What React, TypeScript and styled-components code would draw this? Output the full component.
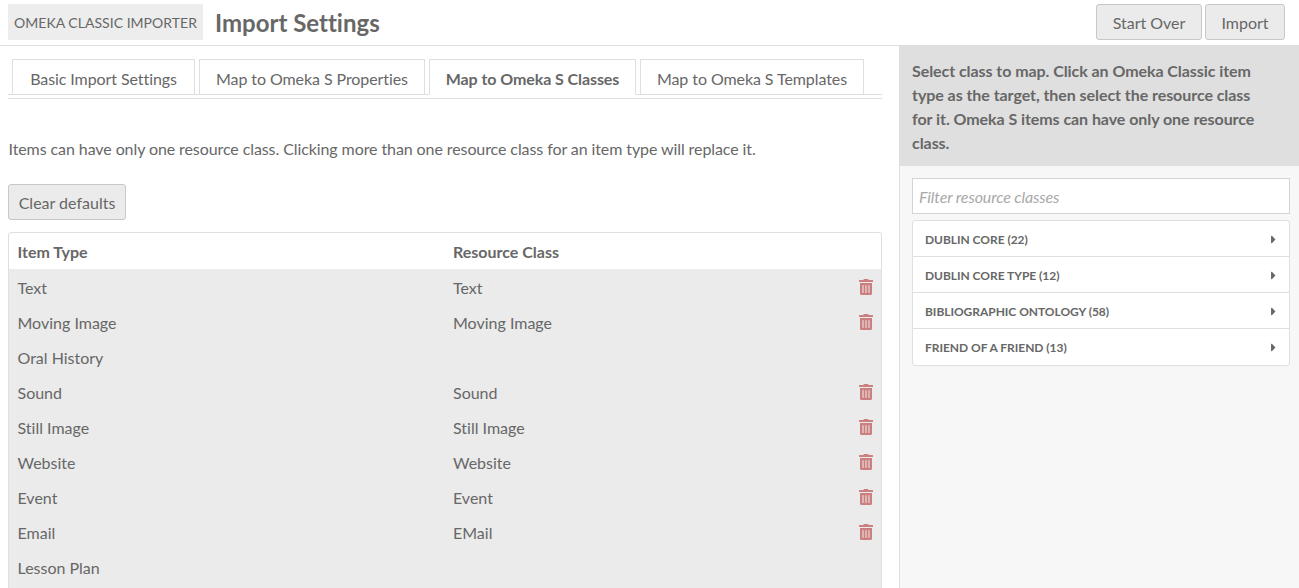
import React, { useState } from "react";
import styled, { createGlobalStyle } from "styled-components";
import { FaTrashAlt, FaCaretRight } from "react-icons/fa";

const GlobalStyle = createGlobalStyle`
  *, *::before, *::after { box-sizing: border-box; }
  body {
    margin: 0;
    background: #fff;
    color: #676767;
    font: 16px/24px Lato, "Liberation Sans", sans-serif;
    font-variant-ligatures: none;
  }
  button, input { font: inherit; font-variant-ligatures: none; color: inherit; }
`;

const Page = styled.div`
  display: flex;
  flex-direction: column;
  height: 100vh;
  overflow: hidden;
`;

const TopBar = styled.header`
  display: flex;
  align-items: flex-start;
  flex: none;
  height: 46px;
  padding: 4px 14px 0 8px;
  border-bottom: 1px solid #dfdfdf;
`;

const ModuleLabel = styled.span`
  width: 195px;
  height: 36px;
  padding: 1px 0 0 6px;
  background: #ededed;
  font-size: 14px;
  line-height: 36px;
  letter-spacing: 0.03px;
  text-transform: uppercase;
  white-space: nowrap;
`;

const Title = styled.h1`
  margin: 0 auto 0 12px;
  font-size: 24px;
  font-weight: 700;
  line-height: 38px;
`;

const Actions = styled.div`
  display: flex;
  gap: 3px;
`;

const Button = styled.button<{ $width: number }>`
  width: ${(p) => p.$width}px;
  height: 36px;
  padding: 2px 0 0;
  border: 1px solid #c8c8c8;
  border-radius: 3px;
  background: #ebebeb;
  line-height: 32px;
  text-align: center;
  white-space: nowrap;
`;

const Body = styled.div`
  display: flex;
  flex: 1;
  min-height: 0;
`;

const Content = styled.main`
  flex: 1;
  min-width: 0;
  padding: 13px 17px 0 8px;
`;

const Tabs = styled.nav`
  display: flex;
  gap: 4px;
  height: 40px;
  padding-left: 4px;
  border-bottom: 1px solid #dfdfdf;
  background: linear-gradient(#dfdfdf, #dfdfdf) 0 35px / 100% 1px no-repeat;
`;

const Tab = styled.button<{ $active: boolean; $width: number }>`
  width: ${(p) => p.$width}px;
  height: 36px;
  padding: 4px 0 0;
  border: 1px solid #dfdfdf;
  border-bottom-color: ${(p) => (p.$active ? "#fff" : "#dfdfdf")};
  background: #fff;
  font-weight: ${(p) => (p.$active ? 700 : 400)};
  letter-spacing: -0.08px;
  white-space: nowrap;
`;

const Note = styled.p`
  margin: 38px 0 23px;
  padding-left: 0.5px;
  letter-spacing: -0.09px;
`;

const Table = styled.div`
  margin-top: 12px;
  border: 1px solid #dfdfdf;
  border-radius: 3px;
`;

const Row = styled.div<{ $head?: boolean }>`
  display: grid;
  grid-template-columns: 435.5px 1fr 22px;
  height: ${(p) => (p.$head ? 36 : 35)}px;
  padding: 7px 0 0 8.5px;
  background: ${(p) => (p.$head ? "transparent" : "#ebebeb")};
  font-weight: ${(p) => (p.$head ? 700 : 400)};
`;

const DeleteButton = styled.button`
  display: flex;
  width: 14px;
  height: 16px;
  margin-top: 3px;
  padding: 0;
  border: 0;
  background: none;
  color: #cc7f7f;
  svg { width: 14px; height: 16px; }
`;

const Sidebar = styled.aside`
  flex: none;
  width: 400px;
  margin-top: -1px;
  border-left: 1px solid #dfdfdf;
  background: #f7f7f7;
`;

const Instructions = styled.div`
  height: 121px;
  padding: 14px 36px 0 12px;
  background: #dfdfdf;
  font-weight: 700;
  letter-spacing: -0.06px;
`;

const Selector = styled.div`
  padding: 12px 9px 0 12px;
`;

const Filter = styled.input`
  display: block;
  width: 100%;
  height: 36px;
  padding: 1px 6px 0;
  border: 1px solid #d3d3d3;
  border-radius: 0;
  background: #fff;
  letter-spacing: -0.13px;
  &::placeholder { color: #a9a9a9; font-style: italic; opacity: 1; }
`;

const VocabularyList = styled.ul`
  margin: 6px 0 0;
  padding: 0;
  list-style: none;
  border: 1px solid #dfdfdf;
  border-radius: 3px;
  background: #fff;
`;

const Vocabulary = styled.li`
  display: flex;
  align-items: flex-start;
  justify-content: space-between;
  height: 36px;
  padding: 7px 13px 0 12px;
  font-size: 12px;
  font-weight: 700;
  letter-spacing: -0.04px;
  text-transform: uppercase;
  &:not(:last-child) { border-bottom: 1px solid #dfdfdf; }
  svg { width: 5px; height: 13px; margin-top: 5px; }
`;

const tabs = [
  { label: "Basic Import Settings", width: 183 },
  { label: "Map to Omeka S Properties", width: 226 },
  { label: "Map to Omeka S Classes", width: 207 },
  { label: "Map to Omeka S Templates", width: 224 },
];

const mappings: [string, string][] = [
  ["Text", "Text"],
  ["Moving Image", "Moving Image"],
  ["Oral History", ""],
  ["Sound", "Sound"],
  ["Still Image", "Still Image"],
  ["Website", "Website"],
  ["Event", "Event"],
  ["Email", "EMail"],
  ["Lesson Plan", ""],
];

const vocabularies = [
  "Dublin Core (22)",
  "Dublin Core Type (12)",
  "Bibliographic Ontology (58)",
  "Friend of a Friend (13)",
];

export default function App() {
  const [active, setActive] = useState(2);
  return (
    <Page>
      <GlobalStyle />
      <TopBar>
        <ModuleLabel>Omeka Classic Importer</ModuleLabel>
        <Title>Import Settings</Title>
        <Actions>
          <Button $width={106}>Start Over</Button>
          <Button $width={80}>Import</Button>
        </Actions>
      </TopBar>
      <Body>
        <Content>
          <Tabs>
            {tabs.map((tab, i) => (
              <Tab key={tab.label} $width={tab.width} $active={i === active} onClick={() => setActive(i)}>
                {tab.label}
              </Tab>
            ))}
          </Tabs>
          <Note>
            Items can have only one resource class. Clicking more than one resource class for an item type will
            replace it.
          </Note>
          <Button $width={118}>Clear defaults</Button>
          <Table>
            <Row $head>
              <span>Item Type</span>
              <span>Resource Class</span>
            </Row>
            {mappings.map(([type, resourceClass]) => (
              <Row key={type}>
                <span>{type}</span>
                <span>{resourceClass}</span>
                {resourceClass && (
                  <DeleteButton aria-label="Remove mapping">
                    <FaTrashAlt />
                  </DeleteButton>
                )}
              </Row>
            ))}
            <Row />
          </Table>
        </Content>
        <Sidebar>
          <Instructions>
            Select class to map. Click an Omeka Classic item type as the target, then select the resource class for
            it. Omeka S items can have only one resource class.
          </Instructions>
          <Selector>
            <Filter placeholder="Filter resource classes" />
            <VocabularyList>
              {vocabularies.map((name) => (
                <Vocabulary key={name}>
                  {name}
                  <FaCaretRight />
                </Vocabulary>
              ))}
            </VocabularyList>
          </Selector>
        </Sidebar>
      </Body>
    </Page>
  );
}
